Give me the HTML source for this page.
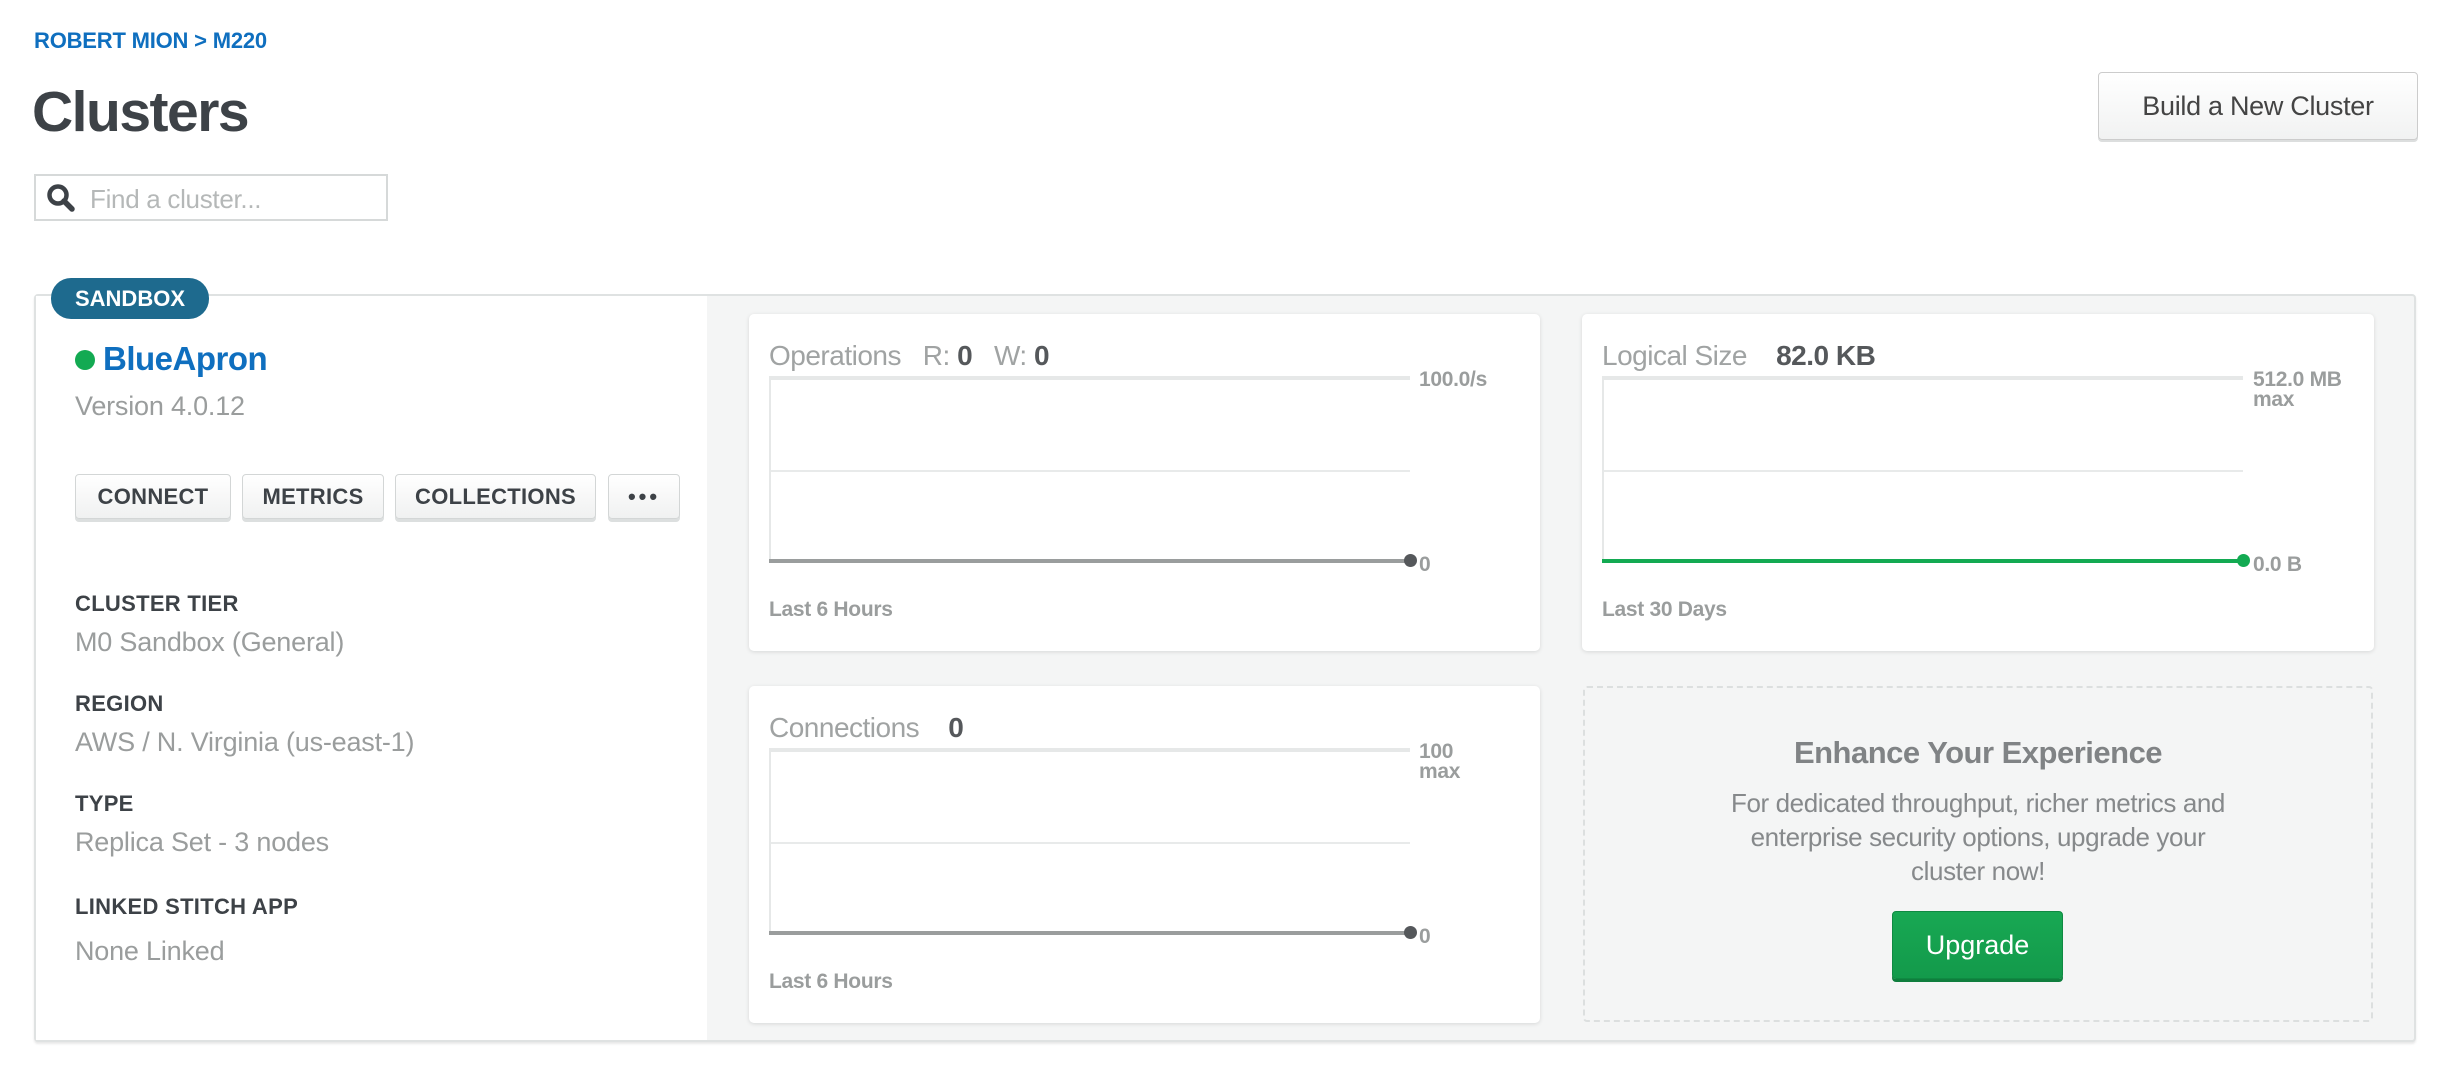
<!DOCTYPE html>
<html><head><meta charset="utf-8"><style>
*{margin:0;padding:0;box-sizing:border-box}
body{width:2446px;height:1074px;background:#fff;font-family:"Liberation Sans",sans-serif;position:relative;overflow:hidden;color:#999}
.a{position:absolute;white-space:nowrap}
.bc{left:34px;top:28px;font-size:22px;font-weight:bold;color:#0f6fbf;letter-spacing:-0.2px}
.h1{left:32px;top:79px;font-size:57px;font-weight:bold;color:#3d4247;letter-spacing:-1.5px}
.newb{left:2098px;top:72px;width:320px;height:68px;border:1px solid #ccc;border-radius:4px;background:linear-gradient(#fff,#f1f2f2);box-shadow:0 2px 0 #dcdede;font-size:27px;color:#444;text-align:center;line-height:66px;letter-spacing:-0.3px}
.search{left:34px;top:174px;width:354px;height:47px;border:2px solid #d6d9d9;}
.search span{position:absolute;left:54px;top:8px;font-size:26px;color:#b5b8b8;letter-spacing:-0.3px}
.card{left:34px;top:294px;width:2382px;height:748px;border:2px solid #dfe2e2;border-radius:4px;background:#f4f5f5;box-shadow:0 2px 2px #e8e8e8}
.leftp{left:36px;top:296px;width:671px;height:744px;background:#fff}
.pill{left:51px;top:278px;width:158px;height:41px;border-radius:20px;background:#1e6a8e;color:#fff;font-size:22px;font-weight:bold;text-align:center;line-height:41px}
.btn{top:474px;height:45px;border:1px solid #d3d6d6;border-radius:4px;background:linear-gradient(#fff,#f0f1f1);box-shadow:0 3px 0 #dcdfdf;font-size:22px;font-weight:bold;color:#3d4247;text-align:center;line-height:43px;letter-spacing:0.3px}
.lab{left:75px;font-size:22px;font-weight:bold;color:#3d4247;letter-spacing:0.3px}
.val{left:75px;font-size:27px;color:#9a9d9d;letter-spacing:-0.2px}
.mc{background:#fff;border-radius:5px;box-shadow:0 1px 4px rgba(0,0,0,.12)}
.t{font-size:28px;color:#a0a3a3;letter-spacing:-0.5px}
.t b{color:#55585b}
.sm{font-size:21px;font-weight:bold;color:#9a9d9d;letter-spacing:-0.3px}
</style></head><body>
<div class="a bc">ROBERT MION &gt; M220</div>
<div class="a h1">Clusters</div>
<div class="a newb">Build a New Cluster</div>
<div class="a search"><svg style="position:absolute;left:10px;top:7px" width="30" height="30" viewBox="0 0 30 30"><circle cx="12" cy="12" r="8.5" fill="none" stroke="#3d4247" stroke-width="4.5"/><path d="M18 18l8 8" stroke="#3d4247" stroke-width="5.5" stroke-linecap="round"/></svg><span>Find a cluster...</span></div>

<div class="a card"></div>
<div class="a leftp"></div>
<div class="a pill">SANDBOX</div>
<div class="a" style="left:75px;top:350px;width:20px;height:20px;border-radius:50%;background:#13aa52"></div>
<div class="a" style="left:103px;top:340px;font-size:33px;font-weight:bold;color:#0f6fbf;letter-spacing:-0.5px">BlueApron</div>
<div class="a val" style="top:391px">Version 4.0.12</div>
<div class="a btn" style="left:75px;width:156px">CONNECT</div>
<div class="a btn" style="left:242px;width:142px">METRICS</div>
<div class="a btn" style="left:395px;width:201px">COLLECTIONS</div>
<div class="a btn" style="left:608px;width:72px;letter-spacing:3px">•••</div>
<div class="a lab" style="top:591px">CLUSTER TIER</div>
<div class="a val" style="top:627px">M0 Sandbox (General)</div>
<div class="a lab" style="top:691px">REGION</div>
<div class="a val" style="top:727px">AWS / N. Virginia (us-east-1)</div>
<div class="a lab" style="top:791px">TYPE</div>
<div class="a val" style="top:827px">Replica Set - 3 nodes</div>
<div class="a lab" style="top:894px">LINKED STITCH APP</div>
<div class="a val" style="top:936px">None Linked</div>

<!-- ops -->
<div class="a mc" style="left:749px;top:314px;width:791px;height:337px"></div>
<div class="a t" style="left:769px;top:340px">Operations&nbsp;&nbsp; R: <b>0</b>&nbsp;&nbsp; W: <b>0</b></div>
<div class="a" style="left:769px;top:376px;width:641px;height:4px;background:#e6e8e8"></div>
<div class="a" style="left:769px;top:376px;width:2px;height:186px;background:#e6e8e8"></div>
<div class="a" style="left:771px;top:470px;width:639px;height:2px;background:#e8eaea"></div>
<div class="a" style="left:769px;top:559px;width:641px;height:4px;background:#9a9d9d"></div>
<div class="a" style="left:1404px;top:554px;width:13px;height:13px;border-radius:50%;background:#55585b"></div>
<div class="a sm" style="left:1419px;top:368px">100.0/s</div>
<div class="a sm" style="left:1419px;top:553px">0</div>
<div class="a sm" style="left:769px;top:598px">Last 6 Hours</div>

<!-- logical -->
<div class="a mc" style="left:1582px;top:314px;width:792px;height:337px"></div>
<div class="a t" style="left:1602px;top:340px">Logical Size&nbsp;&nbsp;&nbsp; <b>82.0 KB</b></div>
<div class="a" style="left:1602px;top:376px;width:641px;height:4px;background:#e6e8e8"></div>
<div class="a" style="left:1602px;top:376px;width:2px;height:186px;background:#e6e8e8"></div>
<div class="a" style="left:1604px;top:470px;width:639px;height:2px;background:#e8eaea"></div>
<div class="a" style="left:1602px;top:559px;width:641px;height:4px;background:#13aa52"></div>
<div class="a" style="left:2237px;top:554px;width:13px;height:13px;border-radius:50%;background:#13aa52"></div>
<div class="a sm" style="left:2253px;top:368px">512.0 MB</div>
<div class="a sm" style="left:2253px;top:389px;line-height:22px">max</div>
<div class="a sm" style="left:2253px;top:553px">0.0 B</div>
<div class="a sm" style="left:1602px;top:598px">Last 30 Days</div>

<!-- connections -->
<div class="a mc" style="left:749px;top:686px;width:791px;height:337px"></div>
<div class="a t" style="left:769px;top:712px">Connections&nbsp;&nbsp;&nbsp; <b>0</b></div>
<div class="a" style="left:769px;top:748px;width:641px;height:4px;background:#e6e8e8"></div>
<div class="a" style="left:769px;top:748px;width:2px;height:186px;background:#e6e8e8"></div>
<div class="a" style="left:771px;top:842px;width:639px;height:2px;background:#e8eaea"></div>
<div class="a" style="left:769px;top:931px;width:641px;height:4px;background:#9a9d9d"></div>
<div class="a" style="left:1404px;top:926px;width:13px;height:13px;border-radius:50%;background:#55585b"></div>
<div class="a sm" style="left:1419px;top:740px">100</div>
<div class="a sm" style="left:1419px;top:761px;line-height:22px">max</div>
<div class="a sm" style="left:1419px;top:925px">0</div>
<div class="a sm" style="left:769px;top:970px">Last 6 Hours</div>

<!-- enhance -->
<div class="a" style="left:1583px;top:686px;width:790px;height:336px;border:2px dashed #dcdfdf;border-radius:4px"></div>
<div class="a" style="left:1583px;top:735px;width:790px;text-align:center;font-size:31px;font-weight:bold;color:#808385;letter-spacing:-0.5px">Enhance Your Experience</div>
<div class="a" style="left:1583px;top:786px;width:790px;text-align:center;font-size:26px;line-height:34px;color:#86898b;white-space:normal;padding:0 130px;letter-spacing:-0.4px">For dedicated throughput, richer metrics and enterprise security options, upgrade your cluster now!</div>
<div class="a" style="left:1892px;top:911px;width:171px;height:68px;border-radius:4px;background:linear-gradient(#18a853,#139a4b);border:1px solid #0f8a42;box-shadow:0 3px 0 #0f7e3d;color:#fff;font-size:27px;text-align:center;line-height:66px">Upgrade</div>
</body></html>
